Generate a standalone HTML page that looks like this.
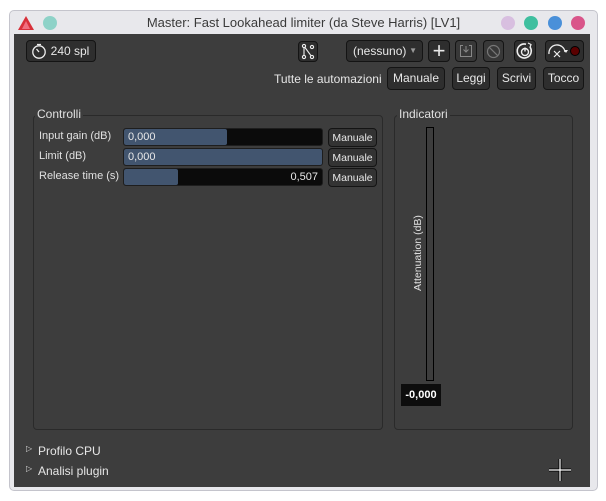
<!DOCTYPE html>
<html><head><meta charset="utf-8"><style>
*{box-sizing:border-box;margin:0;padding:0}
body{width:606px;height:501px;background:#fff;position:relative;overflow:hidden;font-family:"Liberation Sans","DejaVu Sans",sans-serif;font-size:12px;color:#e6e6e6}
.win{position:absolute;left:9px;top:10px;width:589px;height:481px;background:#e8e8ec;border:1px solid #c4c4cc;border-radius:5px}
.title{position:absolute;left:0;top:0;width:100%;height:24px;text-align:center;color:#3a3a3a;font-size:13px;line-height:24px}
.dot{position:absolute;top:5px;width:14px;height:14px;border-radius:50%}
.content{position:absolute;left:14px;top:34px;width:576px;height:453px;background:#3d3d3d}
.a{position:absolute}
.btn{position:absolute;background:#2e2e2e;border:1px solid #141414;border-radius:4px;color:#e8e8e8;text-align:center;font-size:12px}
.grp{position:absolute;border:1px solid #2a2a2a;border-radius:4px}
.gt{position:absolute;background:#3d3d3d;padding:0 2px;font-size:12px;color:#e0e0e0}
.sl{position:absolute;left:123px;width:200px;height:18px;background:#0b0b0b;border:1px solid #1e1e1e;border-radius:3px;overflow:hidden}
.sl .f{position:absolute;left:0;top:0;bottom:0;background:#42556f;border-radius:2px}
.sl span{position:absolute;top:2px;font-size:11px;color:#e8e8e8}
.lbl{position:absolute;left:39px;font-size:11px;color:#e0e0e0}
.mb{position:absolute;left:328px;width:49px;height:19px;background:#333;border:1px solid #141414;border-radius:4px;font-size:10.5px;text-align:center;line-height:19px;color:#e8e8e8}
</style></head><body>
<div class="win">
<div class="title">Master: Fast Lookahead limiter (da Steve Harris) [LV1]</div>
<svg class="a" style="left:8px;top:5px" width="16" height="14"><polygon points="8,0 16,14 0,14" fill="#d8303a"/><polygon points="8,5 12,13 4,13" fill="#f07080"/></svg>
<div class="dot" style="left:33px;background:#8ed2c8"></div>
<div class="dot" style="left:491px;background:#d8bfe0"></div>
<div class="dot" style="left:514px;background:#3fbf9f"></div>
<div class="dot" style="left:538px;background:#4a90d9"></div>
<div class="dot" style="left:561px;background:#d9558a"></div>
</div>
<div class="content"></div>
<div class="btn" style="left:26px;top:40px;width:70px;height:22px;line-height:20px;padding-left:18px">240 spl</div>
<svg class="a" style="left:31px;top:43px" width="16" height="16"><circle cx="8" cy="9" r="6.2" fill="none" stroke="#eee" stroke-width="1.3"/><path d="M8 9L5.5 6M6 1.5h4" stroke="#eee" stroke-width="1.3" fill="none"/></svg>
<div class="btn" style="left:298px;top:41px;width:20px;height:21px"></div>
<svg class="a" style="left:300px;top:43px" width="16" height="17"><g fill="none" stroke="#eee" stroke-width="1.1"><circle cx="4" cy="3" r="1.6"/><circle cx="4" cy="14" r="1.6"/><circle cx="12" cy="14" r="1.6"/><circle cx="12" cy="4" r="1.6"/><path d="M4 4.6v7.8M5 4.5l6 8.2"/></g></svg>
<div class="btn" style="left:346px;top:40px;width:77px;height:22px;line-height:20px;text-align:left;padding-left:6px">(nessuno) <span style="font-size:8px;color:#999;position:absolute;right:5px">▼</span></div>
<div class="btn" style="left:428px;top:40px;width:22px;height:22px;font-size:22px;line-height:19px;font-weight:300">+</div>
<div class="btn" style="left:455px;top:40px;width:22px;height:22px;background:#383838"></div>
<svg class="a" style="left:459px;top:44px" width="14" height="14"><path d="M4 1.5H1.5v11h11v-11H10M7 2v6M4.5 5.5L7 8l2.5-2.5" fill="none" stroke="#888" stroke-width="1"/></svg>
<div class="btn" style="left:483px;top:40px;width:21px;height:22px;background:#383838"></div>
<svg class="a" style="left:486px;top:44px" width="15" height="15"><circle cx="7.5" cy="7.5" r="6" fill="none" stroke="#777" stroke-width="1.2"/><path d="M3.3 3.3l8.4 8.4" stroke="#777" stroke-width="1.2"/></svg>
<div class="btn" style="left:514px;top:40px;width:22px;height:22px"></div>
<svg class="a" style="left:516px;top:42px" width="18" height="18"><path d="M14 5A7 7 0 1 1 10 2.2" fill="none" stroke="#eee" stroke-width="1.6"/><circle cx="9" cy="10" r="3.5" fill="none" stroke="#eee" stroke-width="1.4"/><path d="M9 5.5v4" stroke="#eee" stroke-width="1.4"/><path d="M12 1l3 1.5-1 3" fill="none" stroke="#eee" stroke-width="1.2"/></svg>
<div class="btn" style="left:545px;top:40px;width:39px;height:22px"></div>
<svg class="a" style="left:547px;top:43px" width="24" height="16"><path d="M2 11A8 8 0 0 1 18 9" fill="none" stroke="#eee" stroke-width="1.3"/><path d="M7 8l6 6M13 8l-6 6" stroke="#eee" stroke-width="1.2"/><path d="M17 7l2 3 2-3" fill="#eee"/></svg>
<div class="a" style="left:570px;top:46px;width:10px;height:10px;border-radius:50%;background:#5a0000;border:1px solid #000"></div>
<div class="a" style="left:274px;top:72px;font-size:12px;color:#e6e6e6">Tutte le automazioni</div>
<div class="btn" style="left:387px;top:67px;width:58px;height:23px;line-height:21px">Manuale</div>
<div class="btn" style="left:452px;top:67px;width:38px;height:23px;line-height:21px">Leggi</div>
<div class="btn" style="left:497px;top:67px;width:39px;height:23px;line-height:21px">Scrivi</div>
<div class="btn" style="left:543px;top:67px;width:41px;height:23px;line-height:21px">Tocco</div>
<div class="grp" style="left:33px;top:115px;width:350px;height:315px"></div>
<div class="gt" style="left:35px;top:107px">Controlli</div>
<div class="grp" style="left:394px;top:115px;width:179px;height:315px"></div>
<div class="gt" style="left:397px;top:107px">Indicatori</div>
<div class="lbl" style="top:130px">Input gain (dB)</div>
<div class="sl" style="top:128px"><div class="f" style="width:103px"></div><span style="left:4px">0,000</span></div>
<div class="mb" style="top:128px">Manuale</div>
<div class="lbl" style="top:150px">Limit (dB)</div>
<div class="sl" style="top:148px"><div class="f" style="width:200px"></div><span style="left:4px">0,000</span></div>
<div class="mb" style="top:148px">Manuale</div>
<div class="lbl" style="top:170px">Release time (s)</div>
<div class="sl" style="top:168px"><div class="f" style="width:54px"></div><span style="right:4px">0,507</span></div>
<div class="mb" style="top:168px">Manuale</div>
<div class="a" style="left:426px;top:127px;width:8px;height:254px;border:1px solid #000;background:#3d3d3d"></div>
<div class="a" style="left:368px;top:247px;width:100px;transform:rotate(-90deg);font-size:10.5px;color:#e0e0e0;text-align:center;transform-origin:50% 50%;background:#3d3d3d">Attenuation (dB)</div>
<div class="a" style="left:401px;top:384px;width:40px;height:22px;background:#0d0d0d;color:#fff;font-size:11px;font-weight:bold;text-align:center;line-height:22px">-0,000</div>
<div class="a" style="left:26px;top:444px;font-size:8px;color:#ddd">▷</div>
<div class="a" style="left:38px;top:444px;font-size:12px">Profilo CPU</div>
<div class="a" style="left:26px;top:464px;font-size:8px;color:#ddd">▷</div>
<div class="a" style="left:38px;top:464px;font-size:12px">Analisi plugin</div>
<svg class="a" style="left:548px;top:458px" width="24" height="24"><path d="M12 1v22M1 12h22" stroke="#000" stroke-width="3"/><path d="M12 1v22M1 12h22" stroke="#fff" stroke-width="1.2"/></svg>
</body></html>
